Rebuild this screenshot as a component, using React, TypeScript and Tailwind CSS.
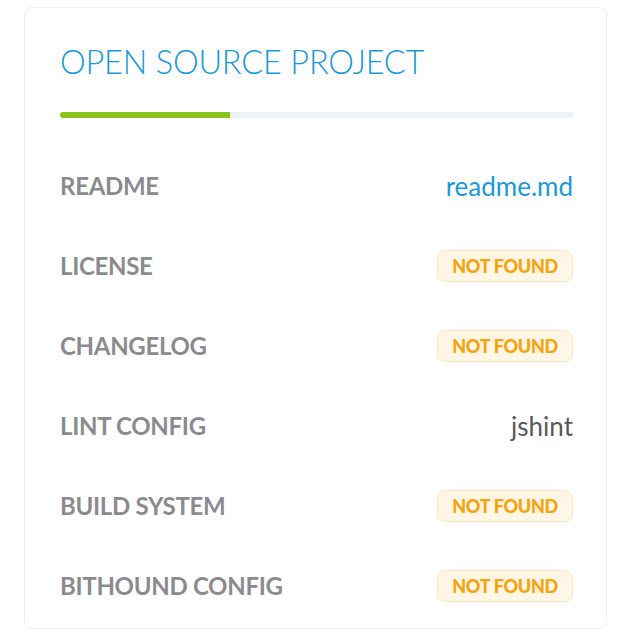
const rows: { label: string; value: string; kind: "link" | "missing" | "text" }[] = [
  { label: "README", value: "readme.md", kind: "link" },
  { label: "LICENSE", value: "NOT FOUND", kind: "missing" },
  { label: "CHANGELOG", value: "NOT FOUND", kind: "missing" },
  { label: "LINT CONFIG", value: "jshint", kind: "text" },
  { label: "BUILD SYSTEM", value: "NOT FOUND", kind: "missing" },
  { label: "BITHOUND CONFIG", value: "NOT FOUND", kind: "missing" },
];

export default function App() {
  return (
    <div className="bg-white min-h-[636px] pt-[7px] pl-[24px] font-['Lato',sans-serif]">
      <div className="w-[583px] h-[622px] rounded-lg border border-[#ebedef] pl-[35px] pr-[33px] pt-[34px]">
        <h2 className="text-[32.5px] leading-[40px] font-light text-[#1b98d6] tracking-[-0.2px]">
          OPEN SOURCE PROJECT
        </h2>
        <div className="mt-[30px] h-[6px] bg-[#eef2f5] rounded-l-full">
          <div className="h-full w-[170px] bg-[#8cc21c] rounded-l-full" />
        </div>
        <div className="mt-[28px] flex flex-col">
          {rows.map((r) => (
            <Row key={r.label} {...r} />
          ))}
        </div>
      </div>
    </div>
  );
}

function Row({ label, value, kind }: { label: string; value: string; kind: "link" | "missing" | "text" }) {
  return (
    <div className="h-[80px] flex items-center justify-between">
      <span className="text-[24px] font-bold text-[#8b8b8f] tracking-[-0.3px]">{label}</span>
      {kind === "link" && <span className="text-[26px] text-[#1b98d6]">{value}</span>}
      {kind === "text" && <span className="text-[26px] text-[#58585c]">{value}</span>}
      {kind === "missing" && (
        <span className="h-[32px] px-[14px] flex items-center rounded-lg bg-[#fff6e6] border border-[#fde6bf] text-[18px] font-black text-[#f8a20a] tracking-[-0.3px]">
          {value}
        </span>
      )}
    </div>
  );
}
